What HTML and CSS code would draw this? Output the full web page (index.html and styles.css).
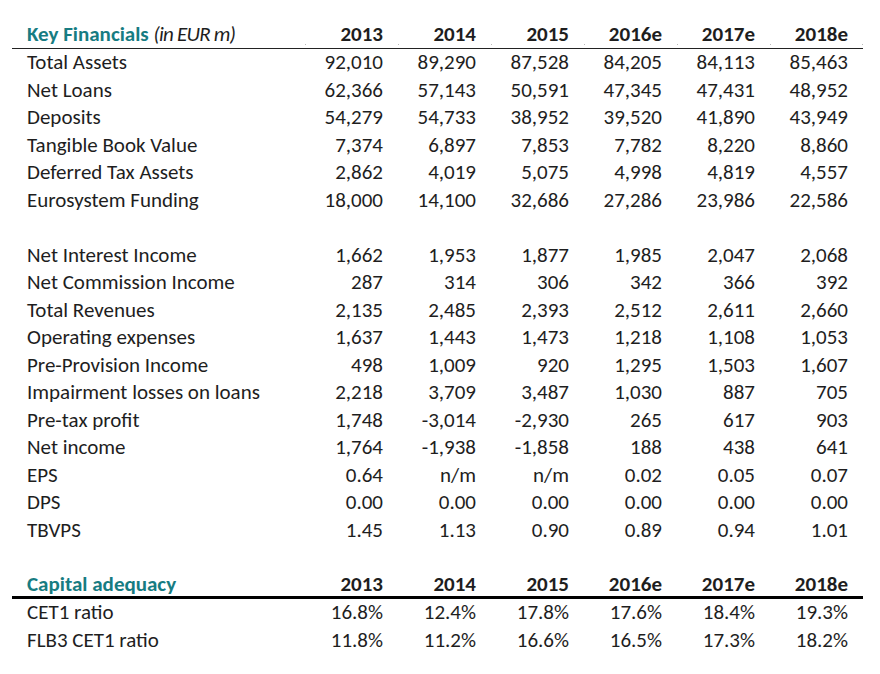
FILE: index.html
```html
<!DOCTYPE html>
<html>
<head>
<meta charset="utf-8">
<link rel="stylesheet" href="styles.css">
</head>
<body>
<div class="sheet">
  <div class="row head">
    <div class="label title">Key Financials <i>(in EUR m)</i></div>
    <div class="num">2013</div><div class="num">2014</div><div class="num">2015</div><div class="num">2016e</div><div class="num">2017e</div><div class="num last">2018e</div>
  </div>
  <div class="row"><div class="label">Total Assets</div><div class="num">92,010</div><div class="num">89,290</div><div class="num">87,528</div><div class="num">84,205</div><div class="num">84,113</div><div class="num">85,463</div></div>
  <div class="row"><div class="label">Net Loans</div><div class="num">62,366</div><div class="num">57,143</div><div class="num">50,591</div><div class="num">47,345</div><div class="num">47,431</div><div class="num">48,952</div></div>
  <div class="row"><div class="label">Deposits</div><div class="num">54,279</div><div class="num">54,733</div><div class="num">38,952</div><div class="num">39,520</div><div class="num">41,890</div><div class="num">43,949</div></div>
  <div class="row"><div class="label">Tangible Book Value</div><div class="num">7,374</div><div class="num">6,897</div><div class="num">7,853</div><div class="num">7,782</div><div class="num">8,220</div><div class="num">8,860</div></div>
  <div class="row"><div class="label">Deferred Tax Assets</div><div class="num">2,862</div><div class="num">4,019</div><div class="num">5,075</div><div class="num">4,998</div><div class="num">4,819</div><div class="num">4,557</div></div>
  <div class="row"><div class="label">Eurosystem Funding</div><div class="num">18,000</div><div class="num">14,100</div><div class="num">32,686</div><div class="num">27,286</div><div class="num">23,986</div><div class="num">22,586</div></div>
  <div class="row empty"></div>
  <div class="row"><div class="label">Net Interest Income</div><div class="num">1,662</div><div class="num">1,953</div><div class="num">1,877</div><div class="num">1,985</div><div class="num">2,047</div><div class="num">2,068</div></div>
  <div class="row"><div class="label">Net Commission Income</div><div class="num">287</div><div class="num">314</div><div class="num">306</div><div class="num">342</div><div class="num">366</div><div class="num">392</div></div>
  <div class="row"><div class="label">Total Revenues</div><div class="num">2,135</div><div class="num">2,485</div><div class="num">2,393</div><div class="num">2,512</div><div class="num">2,611</div><div class="num">2,660</div></div>
  <div class="row"><div class="label">Operating expenses</div><div class="num">1,637</div><div class="num">1,443</div><div class="num">1,473</div><div class="num">1,218</div><div class="num">1,108</div><div class="num">1,053</div></div>
  <div class="row"><div class="label">Pre-Provision Income</div><div class="num">498</div><div class="num">1,009</div><div class="num">920</div><div class="num">1,295</div><div class="num">1,503</div><div class="num">1,607</div></div>
  <div class="row"><div class="label">Impairment losses on loans</div><div class="num">2,218</div><div class="num">3,709</div><div class="num">3,487</div><div class="num">1,030</div><div class="num">887</div><div class="num">705</div></div>
  <div class="row"><div class="label">Pre-tax profit</div><div class="num">1,748</div><div class="num">-3,014</div><div class="num">-2,930</div><div class="num">265</div><div class="num">617</div><div class="num">903</div></div>
  <div class="row"><div class="label">Net income</div><div class="num">1,764</div><div class="num">-1,938</div><div class="num">-1,858</div><div class="num">188</div><div class="num">438</div><div class="num">641</div></div>
  <div class="row"><div class="label">EPS</div><div class="num">0.64</div><div class="num">n/m</div><div class="num">n/m</div><div class="num">0.02</div><div class="num">0.05</div><div class="num">0.07</div></div>
  <div class="row"><div class="label">DPS</div><div class="num">0.00</div><div class="num">0.00</div><div class="num">0.00</div><div class="num">0.00</div><div class="num">0.00</div><div class="num">0.00</div></div>
  <div class="row"><div class="label">TBVPS</div><div class="num">1.45</div><div class="num">1.13</div><div class="num">0.90</div><div class="num">0.89</div><div class="num">0.94</div><div class="num">1.01</div></div>
  <div class="row empty"></div>
  <div class="row head thick">
    <div class="label title">Capital adequacy</div>
    <div class="num">2013</div><div class="num">2014</div><div class="num">2015</div><div class="num">2016e</div><div class="num">2017e</div><div class="num">2018e</div>
  </div>
  <div class="row"><div class="label">CET1 ratio</div><div class="num">16.8%</div><div class="num">12.4%</div><div class="num">17.8%</div><div class="num">17.6%</div><div class="num">18.4%</div><div class="num">19.3%</div></div>
  <div class="row"><div class="label">FLB3 CET1 ratio</div><div class="num">11.8%</div><div class="num">11.2%</div><div class="num">16.6%</div><div class="num">16.5%</div><div class="num">17.3%</div><div class="num">18.2%</div></div>
</div>
</body>
</html>
```
FILE: styles.css
```css
html, body {
  margin: 0;
  padding: 0;
  background: #ffffff;
}
body {
  font-family: Calibri, Carlito, Lato, "Liberation Sans", sans-serif;
  font-size: 21px;
  color: #1e1e1e;
}
.sheet {
  margin-left: 12px;
  padding-top: 21px;
  width: 851px;
}
.row {
  display: grid;
  grid-template-columns: 293px repeat(6, 93px);
  height: 27.5px;
  box-sizing: border-box;
  align-items: center;
}
.label {
  padding-left: 15px;
  white-space: nowrap;
}
.num {
  text-align: right;
  padding-right: 15px;
  white-space: nowrap;
}
.head {
  border-bottom: 1px solid #222;
}
.head .num {
  font-weight: bold;
  position: relative;
}
.head:not(.thick) .num::before {
  content: "";
  position: absolute;
  left: 0;
  bottom: 2px;
  width: 1px;
  height: 1px;
  background: #bbb;
}
.head:not(.thick) .num.last::after {
  content: "";
  position: absolute;
  right: 0;
  bottom: 2px;
  width: 1px;
  height: 1px;
  background: #bbb;
}
.title {
  color: #177c82;
  font-weight: bold;
}
.title i {
  font-weight: normal;
  color: #1e1e1e;
  letter-spacing: -0.8px;
}
.thick {
  border-bottom: 3px solid #000;
}
```
